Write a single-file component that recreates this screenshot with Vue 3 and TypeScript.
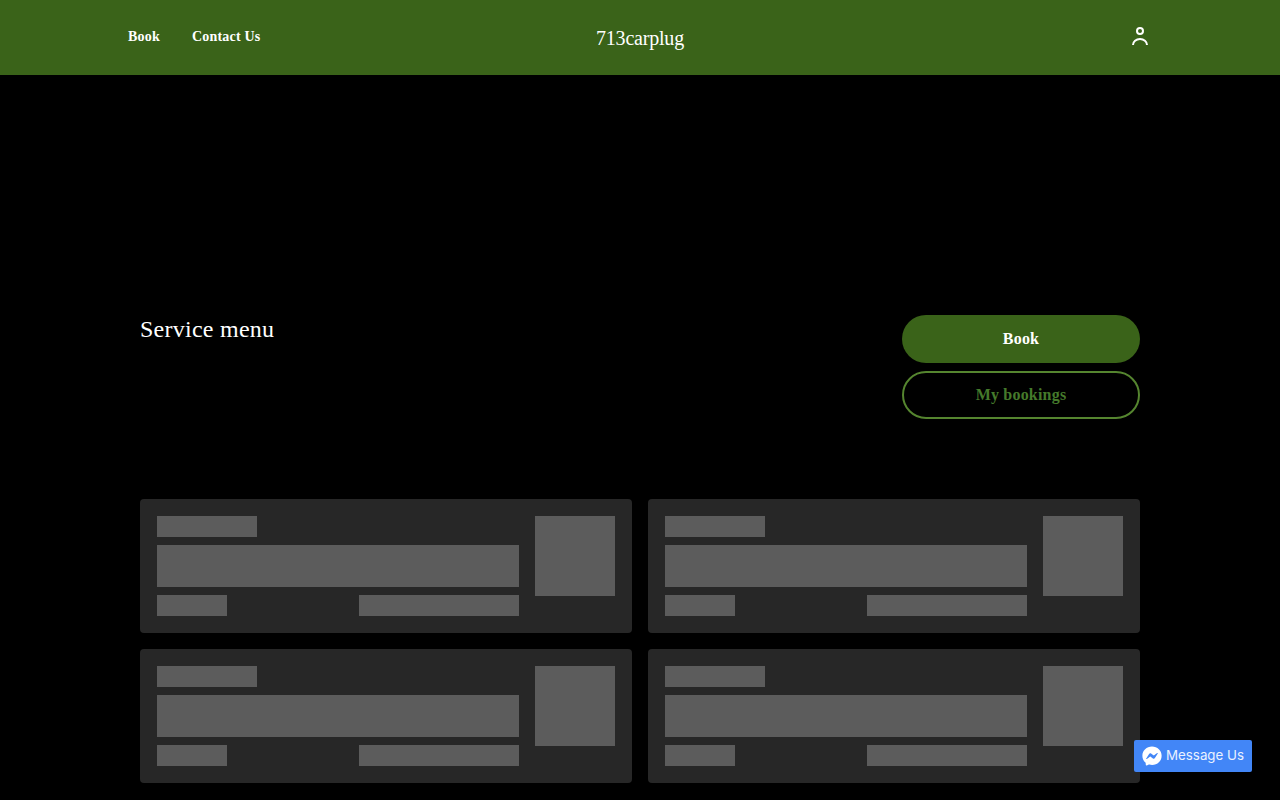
<script setup lang="ts">
const cards: number[] = [1, 2, 3, 4]
</script>

<template>
  <div class="page">
    <header class="topbar">
      <nav class="nav">
        <a class="nav-link">Book</a>
        <a class="nav-link">Contact Us</a>
      </nav>
      <div class="brand">713carplug</div>
      <div class="account">
        <svg width="24" height="24" viewBox="0 0 24 24" fill="none" stroke="#fff" stroke-width="2">
          <circle cx="12" cy="7" r="3" />
          <path d="M5 21a7 6 0 0 1 14 0" />
        </svg>
      </div>
    </header>
    <main class="main">
      <section class="head">
        <h1 class="title">Service menu</h1>
        <div class="actions">
          <button class="btn primary">Book</button>
          <button class="btn outline">My bookings</button>
        </div>
      </section>
      <section class="grid">
        <article v-for="c in cards" :key="c" class="card">
          <div class="card-body">
            <div class="bar small"></div>
            <div class="bar large"></div>
            <div class="card-foot">
              <div class="bar short"></div>
              <div class="bar medium"></div>
            </div>
          </div>
          <div class="thumb"></div>
        </article>
      </section>
    </main>
    <div class="messenger">
      <svg class="messenger-icon" width="22" height="22" viewBox="0 0 24 24">
        <path fill="#fff" d="M12 1.5C6.100 1.500 1.500 5.800 1.500 11.600c0 3 1.200 5.600 3.300 7.400.2.200.3.400.3.600l.1 1.900c0 .6.6 1 1.200.8l2.100-.9c.2-.1.4-.1.6-.1 1 .3 2 .4 3 .4 5.900 0 10.400-4.300 10.400-10.100S17.900 1.500 12 1.500z" />
        <path fill="#4286f7" d="M5.700 14.700l3.100-4.900c.5-.8 1.500-1 2.200-.4l2.500 1.800c.2.200.5.200.8 0l3.300-2.500c.4-.3 1 .2.700.6l-3.100 4.900c-.5.800-1.500 1-2.200.4l-2.500-1.800c-.2-.2-.5-.2-.8 0l-3.300 2.500c-.4.300-1-.2-.7-.6z" />
      </svg>
      <span class="messenger-label">Message Us</span>
    </div>
  </div>
</template>

<style scoped>
.page {
  min-height: 800px;
  background: #000;
  font-family: "Liberation Serif", "Times New Roman", serif;
  color: #fff;
}
.topbar {
  height: 75px;
  background: #3a6319;
  display: grid;
  grid-template-columns: 1fr auto 1fr;
  align-items: center;
  padding: 0 128px;
  box-sizing: border-box;
}
.nav {
  display: flex;
  gap: 32px;
  margin-top: -1px;
}
.nav-link {
  font-size: 14px;
  font-weight: 700;
  letter-spacing: 0.2px;
  color: #fff;
}
.brand {
  font-size: 20px;
  line-height: 24px;
  letter-spacing: -0.2px;
}
.account {
  display: flex;
  justify-content: flex-end;
  margin-top: -3px;
}
.main {
  width: 1000px;
  margin: 0 auto;
  padding-top: 240px;
}
.head {
  display: flex;
  justify-content: space-between;
  align-items: flex-start;
}
.title {
  margin: 0;
  font-size: 24px;
  font-weight: 400;
  line-height: 28px;
  letter-spacing: 0.25px;
}
.actions {
  width: 238px;
  display: flex;
  flex-direction: column;
  gap: 8px;
}
.btn {
  height: 48px;
  border-radius: 24px;
  font-family: inherit;
  font-size: 16px;
  font-weight: 700;
  letter-spacing: 0.2px;
  box-sizing: border-box;
  padding: 0;
}
.primary {
  background: #3a6319;
  border: 0;
  color: #fff;
}
.outline {
  background: transparent;
  border: 2px solid #55852f;
  color: #457a2b;
}
.grid {
  margin-top: 80px;
  display: grid;
  grid-template-columns: 1fr 1fr;
  gap: 16px;
  padding-bottom: 17px;
}
.card {
  height: 134px;
  box-sizing: border-box;
  background: #272727;
  border-radius: 4px;
  padding: 17px;
  display: flex;
  gap: 16px;
}
.card-body {
  flex: 1;
  display: flex;
  flex-direction: column;
  gap: 8px;
}
.bar {
  background: #5c5c5c;
  height: 21px;
}
.small { width: 100px; }
.large { height: 42px; }
.card-foot {
  display: flex;
  justify-content: space-between;
}
.short { width: 70px; }
.medium { width: 160px; }
.thumb {
  width: 80px;
  height: 80px;
  background: #5c5c5c;
}
.messenger {
  position: fixed;
  left: 1134px;
  top: 740px;
  width: 118px;
  height: 32px;
  background: #4286f7;
  border-radius: 2px;
  display: flex;
  align-items: center;
  gap: 3px;
  padding-left: 7px;
  padding-bottom: 1px;
  box-sizing: border-box;
  font-family: Inter, "Liberation Sans", sans-serif;
  font-size: 13.33px;
  color: #eaf2ff;
}
.messenger-icon { flex: none; margin-top: 1px; }
.messenger-label { margin-bottom: 1px; }
</style>

<style>
body { background: #000; }
</style>
